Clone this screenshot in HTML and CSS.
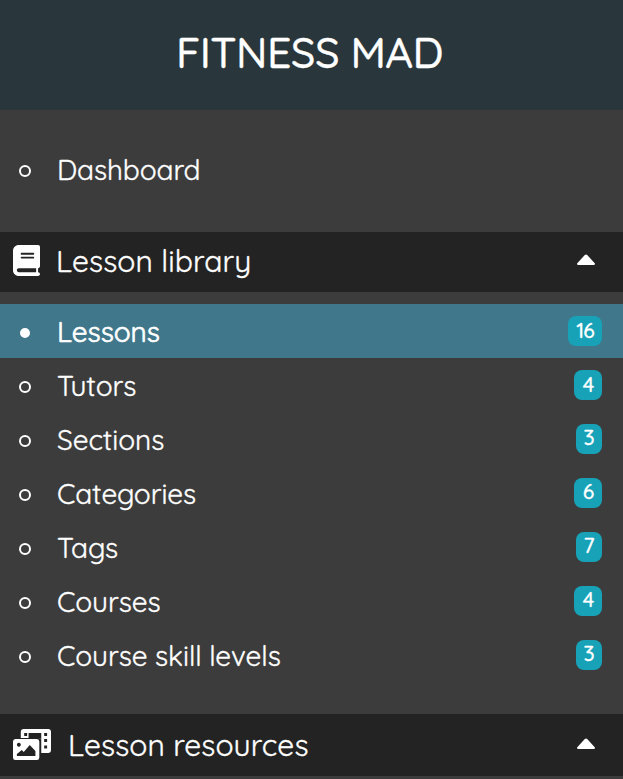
FILE: index.html
```
<!DOCTYPE html>
<html lang="en">
<head>
<meta charset="utf-8">
<title>Fitness Mad</title>
<link rel="stylesheet" href="styles.css">
</head>
<body>
<aside class="sidebar">
  <header class="brand"><span class="brand-name">FITNESS MAD</span></header>
  <nav>
    <a class="item dashboard"><i class="dot"></i><span class="label">Dashboard</span></a>
    <div class="group">
      <svg class="book" viewBox="0 0 448 512" preserveAspectRatio="none"><path fill="#fff" d="M96 0C43 0 0 43 0 96V416c0 53 43 96 96 96H416c17.700 0 32-14.300 32-32s-14.300-32-32-32V384c17.700 0 32-14.300 32-32V32c0-17.700-14.300-32-32-32H96zM96 384H384v64H96c-17.700 0-32-14.300-32-32s14.300-32 32-32zM144 128H336c8.800 0 16 7.200 16 16s-7.200 16-16 16H144c-8.800 0-16-7.200-16-16s7.200-16 16-16zM128 208c0-8.800 7.200-16 16-16H336c8.800 0 16 7.200 16 16s-7.200 16-16 16H144c-8.800 0-16-7.200-16-16z" fill-rule="evenodd"/></svg>
      <span class="label">Lesson library</span>
      <svg class="caret" viewBox="0 0 18 11" preserveAspectRatio="none"><path fill="#fff" d="M1.500 11h15q1.500 0 1.500-1 0-.6-.5-1L10.200 1q-1.200-1-2.400 0L.5 9Q0 9.400 0 10q0 1 1.500 1z"/></svg>
    </div>
    <div class="list">
      <a class="item active"><i class="dot"></i><span class="label">Lessons</span><span class="badge two">16</span></a>
      <a class="item"><i class="dot"></i><span class="label">Tutors</span><span class="badge wide">4</span></a>
      <a class="item"><i class="dot"></i><span class="label">Sections</span><span class="badge raised">3</span></a>
      <a class="item"><i class="dot"></i><span class="label">Categories</span><span class="badge wide mid">6</span></a>
      <a class="item"><i class="dot"></i><span class="label">Tags</span><span class="badge raised">7</span></a>
      <a class="item"><i class="dot"></i><span class="label">Courses</span><span class="badge wide mid">4</span></a>
      <a class="item"><i class="dot"></i><span class="label">Course skill levels</span><span class="badge raised">3</span></a>
    </div>
    <div class="group resources">
      <svg class="media" viewBox="0 0 39 31" preserveAspectRatio="none"><path fill="#fff" fill-rule="evenodd" d="M11 0h25q3 0 3 3v18q0 3-3 3h-7V12q0-3-3-3h-8V4h-2v5H8V3q0-3 3-3zM11.500 4v3h3V4zM18 4v5h9q2 0 2 3V4zM32 4v3h3V4zM32 10v3h3v-3zM32 16.500v3h3v-3z"/><path fill="#fff" fill-rule="evenodd" d="M2.500 10h22q2.500 0 2.500 2.500v16q0 2.500-2.500 2.500h-22Q0 31 0 28.500v-16Q0 10 2.500 10zM6 13.700a2 2 0 1 0 .01 0zM4 27h19v-5l-5.800-6-6.200 7-2-2-5 4z"/></svg>
      <span class="label">Lesson resources</span>
      <svg class="caret" viewBox="0 0 18 11" preserveAspectRatio="none"><path fill="#fff" d="M1.500 11h15q1.500 0 1.500-1 0-.6-.5-1L10.200 1q-1.200-1-2.400 0L.5 9Q0 9.400 0 10q0 1 1.500 1z"/></svg>
    </div>
  </nav>
</aside>
</body>
</html>
```
FILE: styles.css
```
* { box-sizing: border-box; }
body { margin: 0; background: #3c3c3c; overflow: hidden; }
.sidebar {
  width: 623px;
  height: 779px;
  color: #fff;
  font-family: Quicksand, Lato, sans-serif;
  font-size: 28px;
  white-space: nowrap;
}
.brand {
  height: 110px;
  padding: 25px 0 0 176px;
  background: #29363b;
  font-size: 43px;
  font-weight: 500;
  line-height: 54px;
}
.brand-name { letter-spacing: -0.55px; -webkit-text-stroke: 0.3px #fff; }
.label { -webkit-text-stroke: 0.35px #fff; }
.item {
  display: flex;
  align-items: center;
  height: 54px;
  padding: 0 21px 0 19px;
  line-height: 52px;
  letter-spacing: -0.07px;
}
.list .label { padding-top: 2px; }
.dashboard { height: 50px; margin: 35px 0 37px; }
.dot {
  width: 12px;
  height: 12px;
  margin: 4px 26px 0 0;
  border: 2px solid #fff;
  border-radius: 50%;
}
.dashboard .dot { margin-top: 2px; }
.active { background: #41778b; }
.active .dot {
  width: 10px;
  height: 10px;
  margin: 4px 27px 0 1px;
  background: #fff;
}
.active .label { -webkit-text-stroke: 0.7px #fff; }
.group {
  display: flex;
  align-items: center;
  height: 60px;
  padding: 0 28px 2px 13px;
  background: #232323;
  font-size: 30px;
  line-height: 58px;
  letter-spacing: 0.08px;
}
.book { width: 27px; height: 31px; margin: 0 16px 1px 0; }
.media { width: 38px; height: 31px; margin: 0 17px 1px 0; }
.caret { width: 18px; height: 11px; margin: 0 0 3px auto; }
.list { padding: 12px 0 32px; }
.resources { height: 62px; padding-bottom: 1px; }
.badge {
  width: 26px;
  height: 30px;
  margin-left: auto;
  border-radius: 8px;
  background: #17a2b8;
  font-size: 21px;
  font-weight: 500;
  line-height: 29px;
  text-align: center;
  -webkit-text-stroke: 0.3px #fff;
}
.wide { width: 28px; padding-left: 1px; }
.two { width: 34px; letter-spacing: -0.9px; }
.raised { line-height: 26px; }
.mid { line-height: 27px; }
```
